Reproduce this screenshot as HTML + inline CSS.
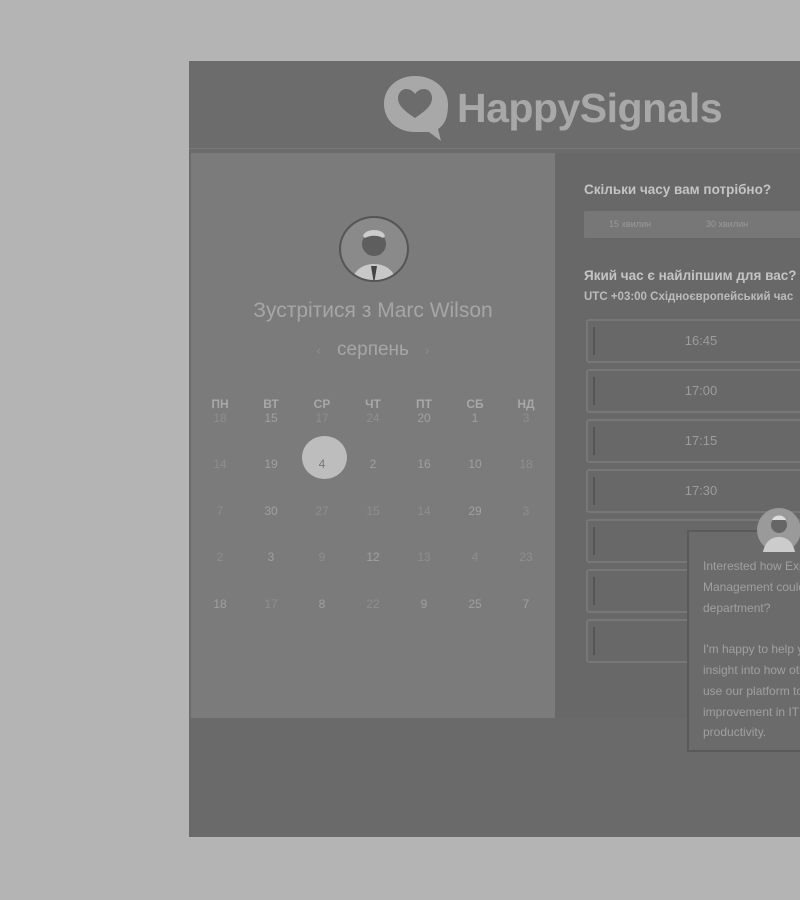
<!DOCTYPE html>
<html><head><meta charset="utf-8"><style>
*{margin:0;padding:0;box-sizing:border-box}
body{width:800px;height:900px;background:#b4b4b4;position:relative;overflow:hidden;font-family:"Liberation Sans","DejaVu Sans",sans-serif}
.page{position:absolute;left:189px;top:61px;width:611px;height:776px;background:#6b6b6b}
.hdr{position:absolute;left:0;top:0;width:611px;height:88px;background:#6c6c6c;border-bottom:1px solid #777}
.logo{position:absolute;left:268px;top:24px;font-size:41px;font-weight:bold;color:#a8a8a8;letter-spacing:-0.5px}
.left{position:absolute;left:2px;top:92px;width:364px;height:565px;background:#7b7b7b}
.right{position:absolute;left:366px;top:92px;width:245px;height:565px;background:#686868}
.av{position:absolute;left:148px;top:63px;width:70px;height:66px;border-radius:50%;border:2px solid #555;background:#8a8a8a;overflow:hidden}
.name{position:absolute;left:0;width:364px;top:146px;text-align:center;color:#a6a6a6;font-size:21px}
.mon{position:absolute;left:0;width:364px;top:186px;text-align:center;color:#a6a6a6;font-size:19px}
.grid{position:absolute;left:4px;top:244px;width:355px}
.grid div{position:absolute;width:50px;text-align:center;font-size:12px;color:#8e8e8e}
.grid .h{color:#a8a8a8;font-weight:bold}
.grid .d{color:#a0a0a0}
.grid .r{margin-top:-5px}
.sel{position:absolute;left:111px;top:283px;width:45px;height:43px;border-radius:50%;background:#bdbdbd}
.q{position:absolute;left:29px;color:#c4c4c4;font-weight:bold;font-size:13.5px;white-space:nowrap}
.seg{position:absolute;left:29px;top:58px;width:230px;height:27px;background:#777;border-radius:2px}
.seg span{position:absolute;top:8px;font-size:9px;color:#999}
.slot{position:absolute;left:31px;width:230px;height:44px;border:2px solid #777;border-radius:3px;color:#9c9c9c;font-size:13px;text-align:center;line-height:40px}
.slot:before{content:"";position:absolute;left:5px;top:6px;width:2px;height:28px;background:#555}
.foot{position:absolute;left:0;top:657px;width:611px;height:119px;background:#6a6a6a}
.chat{position:absolute;left:687px;top:530px;width:120px;height:222px;background:#6b6b6b;border:2px solid #5a5a5a;border-right:none;padding:24px 0 0 14px;color:#a0a0a0;font-size:12px;line-height:20.8px;white-space:nowrap;overflow:hidden}
.cav{position:absolute;left:757px;top:508px;width:44px;height:44px;border-radius:50%;background:#9a9a9a}
</style></head><body>
<div class="page">
 <div class="hdr">
  <svg style="position:absolute;left:192px;top:13px" width="70" height="68" viewBox="0 0 70 68"><path d="M34 2C16 2 3 14 3 30c0 16 13 28 31 28h14l12 9-3-12c8-5 10-14 10-25C67 14 52 2 34 2z" fill="#a8a8a8"/><path d="M34 44C22 36 17 31 17 24c0-5 4-9 8-9 4 0 7 2 9 5 2-3 5-5 9-5 5 0 8 4 8 9 0 7-5 12-17 20z" fill="#6c6c6c"/></svg>
  <div class="logo">HappySignals</div>
 </div>
 <div class="left">
  <div class="av"><svg width="66" height="66" viewBox="0 0 66 66"><circle cx="33" cy="26" r="12" fill="#5e5e5e"/><path d="M22 18c2-8 20-8 22 0l-2 2c-5-3-13-3-18 0z" fill="#ccc"/><path d="M10 66c2-14 12-20 23-20s21 6 23 20z" fill="#c8c8c8"/><path d="M30 48l3 18 3-18z" fill="#444"/></svg></div>
  <div class="name">Зустрітися з Marc Wilson</div>
  <div class="mon"><span style="color:#8c8c8c;font-size:14px">‹</span>&nbsp;&nbsp; серпень &nbsp;&nbsp;<span style="color:#8c8c8c;font-size:14px">›</span></div>
  <div class="sel"></div>
  <div class="grid">
   <div class="h" style="left:0;top:0">ПН</div><div class="h" style="left:51px;top:0">ВТ</div><div class="h" style="left:102px;top:0">СР</div><div class="h" style="left:153px;top:0">ЧТ</div><div class="h" style="left:204px;top:0">ПТ</div><div class="h" style="left:255px;top:0">СБ</div><div class="h" style="left:306px;top:0">НД</div>
   <div class="r" style="left:0;top:19px">18</div><div class="d r" style="left:51px;top:19px">15</div><div class="r" style="left:102px;top:19px">17</div><div class="r" style="left:153px;top:19px">24</div><div class="d r" style="left:204px;top:19px">20</div><div class="d r" style="left:255px;top:19px">1</div><div class="r" style="left:306px;top:19px">3</div>
   <div class="r" style="left:0;top:65px">14</div><div class="d r" style="left:51px;top:65px">19</div><div class="r" style="left:102px;top:65px;color:#777">4</div><div class="d r" style="left:153px;top:65px">2</div><div class="d r" style="left:204px;top:65px">16</div><div class="d r" style="left:255px;top:65px">10</div><div class="r" style="left:306px;top:65px">18</div>
   <div class="r" style="left:0;top:112px">7</div><div class="d r" style="left:51px;top:112px">30</div><div class="r" style="left:102px;top:112px">27</div><div class="r" style="left:153px;top:112px">15</div><div class="r" style="left:204px;top:112px">14</div><div class="d r" style="left:255px;top:112px">29</div><div class="r" style="left:306px;top:112px">3</div>
   <div class="r" style="left:0;top:158px">2</div><div class="d r" style="left:51px;top:158px">3</div><div class="r" style="left:102px;top:158px">9</div><div class="d r" style="left:153px;top:158px">12</div><div class="r" style="left:204px;top:158px">13</div><div class="r" style="left:255px;top:158px">4</div><div class="r" style="left:306px;top:158px">23</div>
   <div class="d r" style="left:0;top:205px">18</div><div class="r" style="left:51px;top:205px">17</div><div class="d r" style="left:102px;top:205px">8</div><div class="r" style="left:153px;top:205px">22</div><div class="d r" style="left:204px;top:205px">9</div><div class="d r" style="left:255px;top:205px">25</div><div class="d r" style="left:306px;top:205px">7</div>
  </div>
 </div>
 <div class="right">
  <div class="q" style="top:29px">Скільки часу вам потрібно?</div>
  <div class="seg"><span style="left:25px">15 хвилин</span><span style="left:122px">30 хвилин</span></div>
  <div class="q" style="top:115px">Який час є найліпшим для вас?</div>
  <div class="q" style="top:138px;font-size:11.5px;color:#bbb">UTC +03:00 Східноєвропейський час</div>
  <div class="slot" style="top:166px">16:45</div>
  <div class="slot" style="top:216px">17:00</div>
  <div class="slot" style="top:266px">17:15</div>
  <div class="slot" style="top:316px">17:30</div>
  <div class="slot" style="top:366px"></div>
  <div class="slot" style="top:416px"></div>
  <div class="slot" style="top:466px"></div>
 </div>
 <div class="foot"></div>
</div>
<div class="chat">Interested how Experience<br>Management could help your<br>department?<br><br>I'm happy to help you get<br>insight into how others<br>use our platform to drive<br>improvement in IT<br>productivity.</div>
<div class="cav"><svg width="44" height="44" viewBox="0 0 44 44"><circle cx="22" cy="17" r="8" fill="#666"/><path d="M15 12c2-6 12-6 14 0z" fill="#ddd"/><path d="M6 44c2-10 8-15 16-15s14 5 16 15z" fill="#ccc"/></svg></div>
</body></html>
